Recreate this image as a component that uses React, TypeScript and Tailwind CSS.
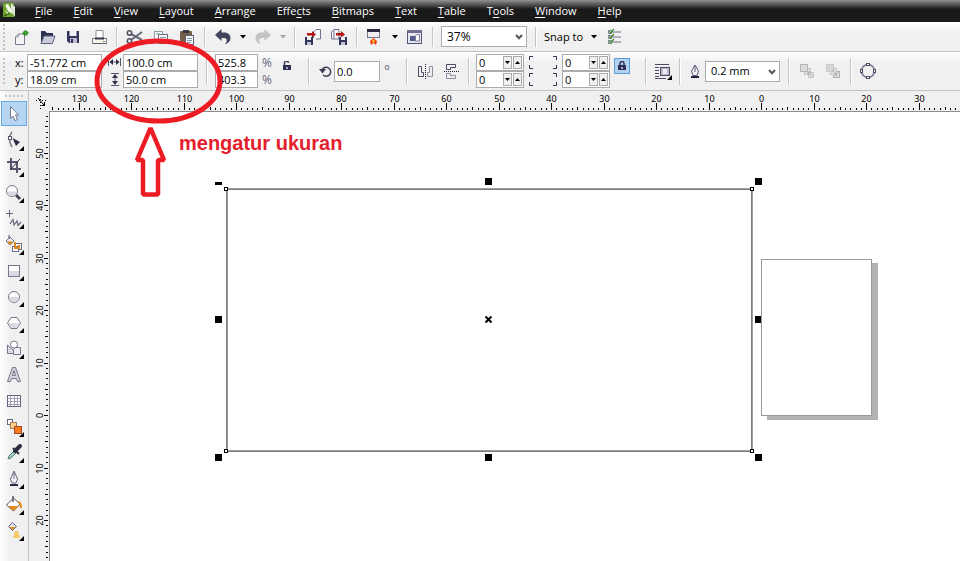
import type { ReactNode } from 'react'

const menus = [
  ['', 'F', 'ile'],
  ['', 'E', 'dit'],
  ['', 'V', 'iew'],
  ['', 'L', 'ayout'],
  ['', 'A', 'rrange'],
  ['Effe', 'c', 'ts'],
  ['', 'B', 'itmaps'],
  ['', 'T', 'ext'],
  ['', 'T', 'able'],
  ['T', 'o', 'ols'],
  ['', 'W', 'indow'],
  ['', 'H', 'elp'],
]

function Sep({ tall = false }: { tall?: boolean }) {
  return <div className={`mx-1 w-[2px] shrink-0 border-l border-[#c4c4c4] bg-white ${tall ? 'h-[27px]' : 'h-5'}`} />
}

function Grip() {
  return (
    <svg className="h-7 w-2 shrink-0" aria-hidden="true">
      {[1, 5, 9, 13, 17, 21, 25].map((y) => (
        <rect key={y} x="3" y={y} width="2" height="2" fill="#c3c3c3" />
      ))}
    </svg>
  )
}

function IconButton({ label, className = 'w-[26px]', children }: { label: string; className?: string; children: ReactNode }) {
  return (
    <button type="button" aria-label={label} className={`flex h-6 shrink-0 items-center justify-center ${className}`}>
      <svg width="20" height="20" viewBox="0 0 20 20" fill="none">
        {children}
      </svg>
    </button>
  )
}

function DropArrow({ label, color = '#000' }: { label: string; color?: string }) {
  return (
    <button type="button" aria-label={label} className="flex h-6 w-[14px] shrink-0 items-center justify-center">
      <svg width="6" height="4" viewBox="0 0 6 4">
        <path d="M0 0H6L3 3.5Z" fill={color} />
      </svg>
    </button>
  )
}

function Combo({ label, value, className, options }: { label: string; value: string; className: string; options: string[] }) {
  return (
    <div className={`relative h-[21px] shrink-0 ${className}`}>
      <select aria-label={label} defaultValue={value} className="h-full w-full appearance-none border border-[#ababab] bg-white pl-[5px] outline-none">
        {options.map((o) => (
          <option key={o}>{o}</option>
        ))}
      </select>
      <svg className="pointer-events-none absolute top-2 right-1" width="8" height="6" viewBox="0 0 8 6">
        <path d="M1 1L4 4.2L7 1" fill="none" stroke="#555" strokeWidth="2" />
      </svg>
    </div>
  )
}

function Field({ label, value }: { label: string; value: string }) {
  return <input aria-label={label} defaultValue={value} className="h-[17px] w-full min-w-0 border border-[#ababab] bg-white px-[2px] outline-none" />
}

function Spin({ label }: { label: string }) {
  return (
    <div className="flex h-[17px] w-12 items-center border border-[#ababab] bg-white pr-px">
      <input aria-label={label} defaultValue="0" className="w-0 min-w-0 flex-1 px-[2px] outline-none" />
      <button type="button" aria-label={`${label} down`} className="mr-px flex h-[13px] w-[9px] items-center justify-center border border-[#ababab] bg-[#f0f0f0]">
        <svg width="5" height="3" viewBox="0 0 5 3" className="shrink-0">
          <path d="M0 0H5L2.5 3Z" fill="#000" />
        </svg>
      </button>
      <button type="button" aria-label={`${label} up`} className="flex h-[13px] w-[9px] items-center justify-center border border-[#ababab] bg-[#f0f0f0]">
        <svg width="5" height="3" viewBox="0 0 5 3" className="shrink-0">
          <path d="M0 3H5L2.5 0Z" fill="#000" />
        </svg>
      </button>
    </div>
  )
}

function MenuBar() {
  return (
    <nav className="flex h-[22px] items-center bg-[linear-gradient(#929292_0px,#777_2px,#1a1a1a_9px)] text-white">
      <svg className="mr-5 ml-[3px] shrink-0" width="12" height="20" viewBox="0 0 12 20">
        <rect x="0" y="2" width="11" height="14" fill="#6da22f" />
        <path d="M8 2L12 6V16L8 10Z" fill="#dfe8d3" />
        <path d="M2 4L5 3L8 8L9 13L5 10Z" fill="#f3f8ea" />
        <path d="M2 9L7 13L4 13Z" fill="#d6eab0" />
        <path d="M1 15L7 12" stroke="#29480f" />
      </svg>
      <div className="flex gap-[21px]">
        {menus.map(([before, key, after]) => (
          <a key={before + key + after} href="#" className="whitespace-nowrap">
            {before}
            <span className="underline underline-offset-2">{key}</span>
            {after}
          </a>
        ))}
      </div>
    </nav>
  )
}

function StandardBar() {
  return (
    <div className="flex h-[30px] items-center overflow-hidden border-b border-[#c4c4c4] bg-[linear-gradient(#fff_0px,#f0f0f0_11px)]">
      <Grip />
      <IconButton label="New">
        <path d="M4.500 10L7.500 7H13.500V17.500H4.500Z" fill="#f4f4f8" stroke="#77778f" />
        <path d="M4.500 10H7.500V7" stroke="#9a9aae" />
        <circle cx="14.500" cy="6" r="2.500" fill="#1f8c1f" />
        <path d="M14.500 3V9M11 6H18" stroke="#4aa83a" />
      </IconButton>
      <IconButton label="Open">
        <path d="M4 16V4H8L10 6H16V10H7Z" fill="#2b3050" />
        <path d="M4 16.500L7 9H18L15.500 16.500Z" fill="#c9cbdb" stroke="#60637f" />
      </IconButton>
      <IconButton label="Save">
        <path d="M4 4H16V16H6L4 14Z" fill="#34355c" />
        <rect x="6.500" y="4" width="7" height="5" fill="#f2f2f8" />
        <rect x="7" y="11" width="7" height="5" fill="#b9bad0" />
        <rect x="8" y="12" width="2" height="4" fill="#34355c" />
      </IconButton>
      <IconButton label="Print">
        <path d="M7 11V3.500H14V11" fill="#fff" stroke="#8d949a" />
        <rect x="3.500" y="11.500" width="14" height="5" fill="#f4f7e8" stroke="#80808f" />
        <path d="M6 11.500H15" stroke="#33334a" strokeWidth="2" />
        <path d="M4 16.500H17" stroke="#60607a" />
        <path d="M14 14.500H16" stroke="#4f9e4f" />
      </IconButton>
      <Sep />
      <IconButton label="Cut">
        <path d="M6 7L17 13M6 13L17 5" stroke="#696979" strokeWidth="2" />
        <circle cx="4.500" cy="6" r="2.200" stroke="#4d4d60" strokeWidth="1.500" />
        <circle cx="4.500" cy="14" r="2.200" stroke="#4d4d60" strokeWidth="1.500" />
      </IconButton>
      <IconButton label="Copy">
        <rect x="3.500" y="4.500" width="8" height="9" fill="#f6f9f9" stroke="#8aa0a8" />
        <rect x="7.500" y="7.500" width="9" height="9" fill="#fbfbfd" stroke="#70708b" />
        <path d="M5 7H9M9 10.500H15M9 12.500H15M9 14.500H13" stroke="#7e9aa4" />
      </IconButton>
      <IconButton label="Paste">
        <rect x="3" y="4" width="12" height="12" rx="1" fill="#75604a" />
        <rect x="6" y="3" width="6" height="3" fill="#37374a" />
        <rect x="8.500" y="8.500" width="8" height="9" fill="#f7f7fb" stroke="#5d5d78" />
        <path d="M10 11.500H15M10 13.500H15M10 15.500H14" stroke="#7e9aa4" />
      </IconButton>
      <Sep />
      <IconButton label="Undo">
        <path d="M2 8L8.500 2V5.500H11C20 5.500 19 16 12 17C15 14 14 11 11 11H8.500V14Z" fill="#43435e" />
      </IconButton>
      <DropArrow label="Undo list" />
      <IconButton label="Redo">
        <path d="M18 8L11.500 2V5.500H9C0 5.500 1 16 8 17C5 14 6 11 9 11H11.500V14Z" fill="#c3c3c3" />
      </IconButton>
      <DropArrow label="Redo list" color="#a5a5a5" />
      <Sep />
      <IconButton label="Import">
        <path d="M10.500 11V5L13 2.500H17.500V12H13" fill="#f5f6fb" stroke="#73738c" />
        <path d="M4 6H9V4L13 7.500L9 10.500V8.500H4Z" fill="#b31313" />
        <rect x="2" y="10" width="8" height="8" fill="#34355c" />
        <rect x="4" y="10" width="4" height="3" fill="#eee" />
        <rect x="4" y="15" width="4" height="3" fill="#c2c2d4" />
      </IconButton>
      <IconButton label="Export">
        <path d="M2.500 12V5L5 2.500H10V12Z" fill="#f5f6fb" stroke="#73738c" />
        <path d="M5 3V12" stroke="#73738c" />
        <path d="M7 6H12V4L16 7.500L12 10.500V8.500H7Z" fill="#b31313" />
        <rect x="10" y="10" width="8" height="8" fill="#34355c" />
        <rect x="12" y="10" width="4" height="3" fill="#eee" />
        <rect x="12" y="15" width="4" height="3" fill="#c2c2d4" />
      </IconButton>
      <Sep />
      <IconButton label="Application launcher">
        <rect x="2.500" y="2.500" width="12" height="8" fill="#ededf2" stroke="#77778c" />
        <rect x="2" y="2" width="13" height="3" fill="#292940" />
        <path d="M8.500 11L12 14L11 18L8.500 16L6 18L5 14Z" fill="#f0401a" />
        <path d="M8.500 12L10 14L8.500 16L7 14Z" fill="#ffc21c" />
      </IconButton>
      <DropArrow label="Launcher list" />
      <IconButton label="Welcome screen">
        <rect x="2.500" y="3.500" width="14" height="13" fill="#e6e6f0" stroke="#55557a" />
        <rect x="2" y="3" width="15" height="3" fill="#6e6e92" />
        <path d="M5 9H10V14H5Z" fill="#555a8d" />
        <path d="M10.500 14V9L12 7.500H14.500V14Z" fill="#fff" stroke="#7d7d98" />
      </IconButton>
      <Sep />
      <Combo label="Zoom" value="37%" className="ml-[3px] w-[86px] text-xs" options={['37%', '50%', '75%', '100%', '200%']} />
      <div className="ml-1 flex items-center">
        <Sep />
      </div>
      <button type="button" className="ml-[3px] whitespace-nowrap">Snap to</button>
      <div className="ml-1">
        <DropArrow label="Snap options" />
      </div>
      <IconButton label="Options">
        <path d="M8 5H17M8 10H17M8 15H17" stroke="#6d6d86" />
        <rect x="4.500" y="3.500" width="3" height="3" stroke="#8c8c9c" />
        <rect x="4.500" y="8.500" width="3" height="3" stroke="#8c8c9c" />
        <rect x="4.500" y="13.500" width="3" height="3" stroke="#8c8c9c" />
        <path d="M5 4L6.500 6L10 2M5 9L6.500 11L10 7M5 14L6.500 16L10 12" stroke="#3f8f2c" strokeWidth="1.200" />
      </IconButton>
    </div>
  )
}

function PropertyBar() {
  return (
    <div className="flex h-[39px] items-center overflow-hidden border-b border-[#c4c4c4] bg-[linear-gradient(#fff_0px,#f0f0f0_11px)]">
      <Grip />
      <div className="ml-[7px] grid shrink-0 grid-cols-[12px_75px] items-center">
        <span>x:</span>
        <Field label="x position" value="-51.772 cm" />
        <span>y:</span>
        <Field label="y position" value="18.09 cm" />
      </div>
      <div className="ml-[6px] grid shrink-0 grid-cols-[15px_75px] items-center">
        <svg width="13" height="11" viewBox="0 0 13 11">
          <path d="M0.500 1V9M12.500 1V9M2 5H11" stroke="#55556d" />
          <path d="M1.500 5L5 2V8ZM11.500 5L8 2V8Z" fill="#30304a" />
        </svg>
        <Field label="Width" value="100.0 cm" />
        <svg width="13" height="13" viewBox="0 0 13 13">
          <path d="M3 0.500H11M3 12.500H11M7 2V11" stroke="#55556d" />
          <path d="M7 1L10 5H4ZM7 12L10 8H4Z" fill="#30304a" />
        </svg>
        <Field label="Height" value="50.0 cm" />
      </div>
      <div className="ml-1 flex items-center">
        <Sep tall />
      </div>
      <div className="ml-[3px] grid shrink-0 grid-cols-[43px_16px] items-center">
        <Field label="Scale x" value="525.8" />
        <span className="pl-1 text-xs leading-4 text-[#66667a]">%</span>
        <Field label="Scale y" value="403.3" />
        <span className="pl-1 text-xs leading-4 text-[#66667a]">%</span>
      </div>
      <button type="button" aria-label="Lock ratio" className="mt-[9px] flex h-4 w-[26px] shrink-0 justify-center self-start">
        <svg width="10" height="11" viewBox="0 0 10 11">
          <path d="M2.500 5V2.500A2 2 0 0 1 6.500 2" fill="none" stroke="#45455f" strokeWidth="1.500" />
          <rect x="1" y="4" width="8" height="5" fill="#2f2f55" />
          <rect x="4" y="6" width="2" height="2" fill="#a7a7c4" />
        </svg>
      </button>
      <div className="ml-1 flex items-center">
        <Sep tall />
      </div>
      <div className="flex shrink-0 items-center">
        <svg className="w-5" height="14" viewBox="-5 -1 20 14">
          <path d="M3 5A4.500 4.500 0 1 1 4 10" fill="none" stroke="#3c3c55" strokeWidth="1.500" />
          <path d="M0 4H7L3.500 8.500Z" fill="#3c3c55" />
        </svg>
        <input aria-label="Angle of rotation" defaultValue="0.0" className="h-[21px] w-[46px] border border-[#ababab] bg-white px-[2px] outline-none" />
        <span className="w-[14px] text-center text-sm text-[#66667a]">°</span>
      </div>
      <div className="ml-2 flex items-center">
        <Sep tall />
      </div>
      <IconButton label="Mirror horizontally">
        <path d="M3.500 5.500H6.500V11.500H8.500V15.500H3.500Z" stroke="#4a4a64" />
        <path d="M17.500 5.500H14.500V11.500H12.500V15.500H17.500Z" stroke="#8e8ea2" />
        <path d="M10.500 3V18" stroke="#222" strokeDasharray="1 1" />
      </IconButton>
      <IconButton label="Mirror vertically">
        <path d="M5.500 8.500V3.500H14.500V6.500H9.500V8.500Z" stroke="#4a4a64" />
        <path d="M5.500 12.500V17.500H14.500V14.500H9.500V12.500Z" stroke="#8e8ea2" />
        <path d="M3 10.500H18" stroke="#222" strokeDasharray="1 1" />
      </IconButton>
      <Sep tall />
      <div className="ml-[2px] flex shrink-0 items-center">
        <div>
          <Spin label="Corner 1" />
          <Spin label="Corner 2" />
        </div>
        <svg className="w-[38px]" height="32" viewBox="0 0 38 32" fill="none" stroke="#34344f">
          <path d="M9 1.500H5.500V5M5.500 10V13.500H9M29 1.500H32.500V5M32.500 10V13.500H29" />
          <path d="M9 18.500H5.500V22M5.500 27V30.500H9M29 18.500H32.500V22M32.500 27V30.500H29" />
        </svg>
        <div>
          <Spin label="Corner 3" />
          <Spin label="Corner 4" />
        </div>
      </div>
      <button type="button" aria-label="Edit corners together" className="mt-[6px] ml-1 flex h-4 w-4 shrink-0 items-center justify-center self-start border border-[#5a9bd8] bg-[#b3d3f2]">
        <svg width="10" height="10" viewBox="0 0 10 10" className="shrink-0">
          <path d="M3 4V2.500A2 2 0 0 1 7 2.500V5" fill="none" stroke="#34345a" strokeWidth="1.500" />
          <rect x="1" y="4" width="8" height="5" fill="#2f2f55" />
          <rect x="4" y="6" width="2" height="2" fill="#a7a7c4" />
        </svg>
      </button>
      <div className="ml-[11px] flex items-center">
        <Sep tall />
      </div>
      <IconButton label="Wrap text" className="w-6">
        <path d="M2 3.500H16M2 6.500H6M2 9.500H6M2 12.500H6M2 15.500H6M2 17.500H13" stroke="#4b4b66" />
        <rect x="7.500" y="6.500" width="9" height="8" fill="#b9b9cc" stroke="#4b4b66" />
        <rect x="10" y="8" width="4" height="5" fill="#ededf5" />
        <path d="M19 14V19H14Z" fill="#000" />
      </IconButton>
      <Sep tall />
      <IconButton label="Outline pen" className="w-5">
        <path d="M10 4L13.500 10L12 14.500H8L6.500 10Z" fill="#f1f1f7" stroke="#5d5d7a" />
        <path d="M10 4V11" stroke="#5d5d7a" />
        <path d="M6 16H14" stroke="#25253a" strokeWidth="2" />
      </IconButton>
      <Combo label="Outline width" value="0.2 mm" className="w-[75px]" options={['None', '0.2 mm', '0.5 mm', '1.0 mm']} />
      <div className="ml-1 flex items-center">
        <Sep tall />
      </div>
      <IconButton label="To front">
        <rect x="11.500" y="11.500" width="5" height="5" fill="#dedede" stroke="#c6c6c6" />
        <rect x="7.500" y="7.500" width="6" height="6" fill="#dedede" stroke="#c6c6c6" />
        <rect x="3.500" y="3.500" width="7" height="7" fill="#dadada" stroke="#b5b5b5" />
        <path d="M15 15L11 11M11 14V11H14" stroke="#b0b0b0" />
      </IconButton>
      <IconButton label="To back">
        <rect x="10.500" y="10.500" width="6" height="6" fill="#dedede" stroke="#b0b0b0" />
        <rect x="7.500" y="7.500" width="6" height="6" fill="#dedede" stroke="#c6c6c6" />
        <rect x="3.500" y="3.500" width="7" height="7" fill="#d6d6d6" stroke="#cacaca" />
        <path d="M9 9L14 14M14 11V14H11" stroke="#b0b0b0" />
      </IconButton>
      <Sep tall />
      <IconButton label="Convert to curves" className="w-6">
        <circle cx="10" cy="10" r="6.500" stroke="#77778f" strokeWidth="1.500" />
        <g fill="#fff" stroke="#4b4b66">
          <rect x="8.500" y="2.500" width="3" height="2" />
          <rect x="8.500" y="15.500" width="3" height="2" />
          <rect x="2.500" y="8.500" width="2" height="3" />
          <rect x="15.500" y="8.500" width="2" height="3" />
        </g>
      </IconButton>
    </div>
  )
}

const tools: { name: string; flyout: boolean; icon: ReactNode }[] = [
  {
    name: 'Pick',
    flyout: false,
    icon: <path d="M9.500 4.500V16.500L12 14L14 18.500L16.500 17.500L14.500 13H17.500Z" fill="#fff" stroke="#77778c" />,
  },
  {
    name: 'Shape',
    flyout: true,
    icon: (
      <>
        <path d="M11 4C7 9 8 14 11 19" fill="none" stroke="#77778c" strokeWidth="1.500" />
        <rect x="7.500" y="8.500" width="3" height="3" fill="#fff" stroke="#55556d" />
        <path d="M11.500 10L19 14L15 18Z" fill="#2d2d45" />
      </>
    ),
  },
  {
    name: 'Crop',
    flyout: true,
    icon: (
      <>
        <path d="M6 8H16V19M10 4V15H20" fill="none" stroke="#55556d" strokeWidth="2" />
        <path d="M9 16L19 5" stroke="#33334c" />
      </>
    ),
  },
  {
    name: 'Zoom',
    flyout: true,
    icon: (
      <>
        <path d="M15 15L19 19" stroke="#45455e" strokeWidth="3" />
        <circle cx="11" cy="11" r="5.500" fill="#fdfdff" stroke="#77778c" />
        <path d="M6.500 11.500H15.500A4.500 4.500 0 0 1 6.500 11.500Z" fill="#d9d9e2" />
      </>
    ),
  },
  {
    name: 'Freehand',
    flyout: true,
    icon: (
      <>
        <path d="M5 7.500H12M8.500 4V11" stroke="#66667f" />
        <path d="M9 18L12 13.500L13 19L16 15L17 19.500L20 16" fill="none" stroke="#66667f" strokeWidth="1.200" />
      </>
    ),
  },
  {
    name: 'Smart fill',
    flyout: true,
    icon: (
      <>
        <path d="M5 9L9 5L13 9L9 13Z" fill="#e5e5ec" stroke="#77778c" />
        <path d="M6 9.500H12L9 13Z" fill="#e58a1f" />
        <path d="M8 3V7" stroke="#55556d" />
        <rect x="14.500" y="11.500" width="6" height="6" fill="#fff" stroke="#6b6b86" />
        <rect x="11.500" y="14.500" width="6" height="5" fill="#fff" stroke="#6b6b86" />
        <path d="M14 10V16H18V13" fill="none" stroke="#e0871c" strokeWidth="2" />
      </>
    ),
  },
  {
    name: 'Rectangle',
    flyout: true,
    icon: (
      <>
        <rect x="7.500" y="7.500" width="11" height="11" fill="#fff" stroke="#77778c" />
        <rect x="8" y="13" width="10" height="5" fill="#dadae3" />
      </>
    ),
  },
  {
    name: 'Ellipse',
    flyout: true,
    icon: (
      <>
        <circle cx="13" cy="13" r="5.500" fill="#fff" stroke="#77778c" />
        <path d="M8 13H18A5 5 0 0 1 8 13Z" fill="#dadae3" />
      </>
    ),
  },
  {
    name: 'Polygon',
    flyout: true,
    icon: (
      <>
        <path d="M6.500 13L10 7.500H16L19.500 13L16 18.500H10Z" fill="#fff" stroke="#77778c" />
        <path d="M7.500 13H18.500L15.500 18H10.500Z" fill="#dadae3" />
      </>
    ),
  },
  {
    name: 'Basic shapes',
    flyout: true,
    icon: (
      <>
        <path d="M6.500 9V17.500H15.500Z" fill="#dadae3" stroke="#77778c" />
        <circle cx="13" cy="8.500" r="3.500" fill="#fff" stroke="#77778c" />
        <path d="M12.500 13.500L14.500 11.500H19.500V18.500H12.500Z" fill="#eeeef4" stroke="#77778c" />
      </>
    ),
  },
  {
    name: 'Text',
    flyout: false,
    icon: <path d="M6.500 19.500L11.500 5.500H14.500L19.500 19.500H16.500L15.500 16.500H10.500L9.500 19.500ZM11.500 13.500H14.500L13 8.500Z" fill="#d4d4df" stroke="#77778c" />,
  },
  {
    name: 'Table',
    flyout: false,
    icon: (
      <>
        <rect x="6.500" y="7.500" width="13" height="11" fill="#fff" stroke="#66667f" />
        <path d="M7 10.500H19M7 13.500H19M7 16.500H19M9.500 8V18M13.500 8V18M16.500 8V18" stroke="#a3a3b5" />
      </>
    ),
  },
  {
    name: 'Blend',
    flyout: true,
    icon: (
      <>
        <rect x="6.500" y="5.500" width="5" height="5" fill="#fff" stroke="#66667f" />
        <rect x="9.500" y="8.500" width="6" height="6" fill="#ffd28a" stroke="#a57b55" />
        <rect x="13.500" y="12.500" width="7" height="7" fill="#ff7a1a" stroke="#a04a2a" />
      </>
    ),
  },
  {
    name: 'Eyedropper',
    flyout: true,
    icon: (
      <>
        <path d="M7 19L8 16L14 10L16 12L10 18Z" fill="#a8cfc6" stroke="#557f7a" />
        <path d="M12 8L18 14" stroke="#2b2b40" strokeWidth="2" />
        <path d="M14 11L19 6" stroke="#2b2b40" strokeWidth="4" strokeLinecap="round" />
      </>
    ),
  },
  {
    name: 'Outline',
    flyout: true,
    icon: (
      <>
        <path d="M13 5L16.500 13L15 17H11L9.500 13Z" fill="#f6f6fa" stroke="#66667f" />
        <path d="M13 6V13" stroke="#66667f" />
        <path d="M9 19H17" stroke="#2b2b40" strokeWidth="2" />
      </>
    ),
  },
  {
    name: 'Fill',
    flyout: true,
    icon: (
      <>
        <path d="M5.500 13L12.500 6L19 12L12.500 19Z" fill="#fff" stroke="#55556d" />
        <path d="M7 14H18L12.500 19Z" fill="#e58a1f" />
        <path d="M12 4V10" stroke="#55556d" strokeWidth="1.500" />
        <path d="M17 10C20 10 20 13 20 16" fill="none" stroke="#e58a1f" strokeWidth="2" />
      </>
    ),
  },
  {
    name: 'Interactive fill',
    flyout: true,
    icon: (
      <>
        <path d="M7.500 8.500L11.500 4.500L15.500 8.500L11.500 12.500Z" fill="#e5e5ec" stroke="#66667f" />
        <path d="M8.500 9H14.500L11.500 12Z" fill="#e58a1f" />
        <path d="M14 13H17L19 20H12Z" fill="#f6c867" />
      </>
    ),
  },
]

function Toolbox() {
  return (
    <aside className="flex w-[29px] shrink-0 flex-col items-center gap-px border-r border-[#c4c4c4] bg-[linear-gradient(90deg,#fff_0px,#f0f0f0_10px)]">
      <svg className="h-[9px] w-5" aria-hidden="true">
        {[0, 4, 8, 12, 16].map((x) => (
          <rect key={x} x={x + 1} y="4" width="2" height="2" fill="#c3c3c3" />
        ))}
      </svg>
      {tools.map((tool, i) => (
        <button
          key={tool.name}
          type="button"
          aria-label={tool.name}
          className={`h-[25px] w-[26px] shrink-0 ${i === 0 ? 'bg-[#b5d5f2] ring-1 ring-[#6aaae2] ring-inset' : ''}`}
        >
          <svg width="26" height="25" viewBox="0 -1 26 25">
            {tool.icon}
            {tool.flyout && <path d="M23 18V23H18Z" fill="#000" />}
          </svg>
        </button>
      ))}
    </aside>
  )
}

// distance on screen of one ruler unit
const UNIT = 5.25

function range(from: number, to: number) {
  return Array.from({ length: to - from + 1 }, (_, i) => from + i)
}

function TopRuler() {
  return (
    <svg className="block h-5 w-full font-['Noto_Sans',sans-serif] text-[9px]">
      {range(-135, 37).map((n) => {
        const x = Math.round(712 + n * UNIT)
        const size = n % 10 === 0 ? 7 : n % 5 === 0 ? 3 : 2
        return (
          <g key={n}>
            <rect x={x} y={19 - size} width="1" height={size} fill="#000" />
            {n % 10 === 0 && (
              <text x={x + 0.5} y="11" textAnchor="middle">
                {Math.abs(n)}
              </text>
            )}
          </g>
        )
      })}
    </svg>
  )
}

function SideRuler() {
  return (
    <svg className="absolute inset-0 h-full w-5 font-['Noto_Sans',sans-serif] text-[9px]">
      {range(-57, 27).map((n) => {
        const y = Math.round(304 + n * UNIT)
        const size = n % 10 === 0 ? 4 : n % 5 === 0 ? 3 : 2
        return (
          <g key={n}>
            <rect x={19 - size} y={y} width={size} height="1" fill="#000" />
            {n % 10 === 0 && (
              <text transform={`translate(14 ${y + 0.5}) rotate(-90)`} textAnchor="middle">
                {Math.abs(n)}
              </text>
            )}
          </g>
        )
      })}
    </svg>
  )
}

const handles = [
  [435, 66],
  [705, 66],
  [165, 204],
  [705, 204],
  [165, 342],
  [435, 342],
  [705, 342],
]

function Drawing() {
  return (
    <svg className="absolute inset-0 h-full w-full" shapeRendering="crispEdges">
      {/* selected object */}
      <rect x="177" y="77" width="525" height="262" fill="none" stroke="#a0a0a0" strokeWidth="2" />
      <rect x="176.500" y="77.500" width="525" height="262" fill="none" stroke="#7c7c7c" />
      {[
        [174, 75],
        [700, 75],
        [174, 337],
        [700, 337],
      ].map(([x, y]) => (
        <g key={`${x}-${y}`}>
          <rect x={x} y={y} width="4" height="4" />
          <rect x={x + 1} y={y + 1} width="2" height="2" fill="#fff" />
        </g>
      ))}
      <rect x="165" y="70" width="7" height="3" />
      {handles.map(([x, y]) => (
        <rect key={`${x}-${y}`} x={x} y={y} width="7" height="7" />
      ))}
      <path d="M435.500 204.500L441.500 210.500M441.500 204.500L435.500 210.500" stroke="#000" strokeWidth="2" shapeRendering="auto" />
      {/* page */}
      <rect x="717" y="151" width="111" height="157" fill="#b2b2b2" />
      <rect x="711.500" y="147.500" width="110" height="156" fill="#fff" stroke="#999" />
    </svg>
  )
}

function Notes() {
  return (
    <svg className="pointer-events-none absolute top-0 left-0" width="360" height="210" viewBox="0 0 360 210" fill="none" stroke="#ed1c24">
      <ellipse cx="158.500" cy="81" rx="61.500" ry="40" strokeWidth="5" />
      <path d="M150.500 128L164 160H158V194.500H143V160H137Z" strokeWidth="4.500" strokeLinejoin="bevel" />
      <text x="179" y="150" fill="#e3202c" stroke="none" className="font-['Liberation_Sans',Arial,sans-serif] text-xl font-bold">
        mengatur ukuran
      </text>
    </svg>
  )
}

export default function App() {
  return (
    <div className="relative flex min-h-screen flex-col overflow-hidden bg-[#f0f0f0] font-['Open_Sans',sans-serif] text-[11px] leading-4 text-black">
      <MenuBar />
      <StandardBar />
      <PropertyBar />
      <div className="flex flex-1">
        <Toolbox />
        <main className="grid min-w-0 flex-1 grid-cols-[20px_1fr] grid-rows-[20px_1fr]">
          <svg width="20" height="20" viewBox="0 0 20 20" stroke="#000">
            <path d="M7 9.500H19M11.500 5V18" strokeDasharray="1 2" />
            <path d="M9 7L15 14M12.500 14.500H16M15.500 11V15" fill="none" />
          </svg>
          <TopRuler />
          <div className="relative">
            <SideRuler />
          </div>
          <div className="relative border-t border-l border-[#8c8c8c] bg-white">
            <Drawing />
          </div>
        </main>
      </div>
      <Notes />
    </div>
  )
}
